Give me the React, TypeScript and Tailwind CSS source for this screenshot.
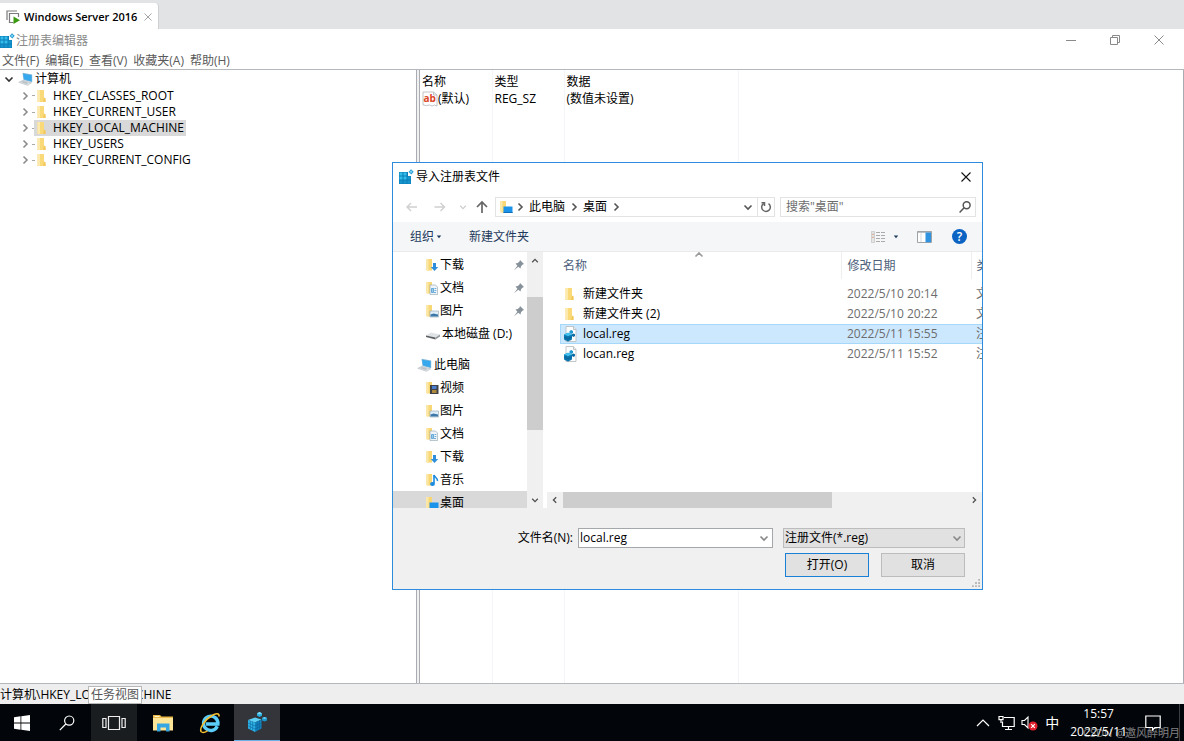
import { useState } from "react"
import type { ReactNode } from "react"

const TREE_KEYS = [
  "HKEY_CLASSES_ROOT",
  "HKEY_CURRENT_USER",
  "HKEY_LOCAL_MACHINE",
  "HKEY_USERS",
  "HKEY_CURRENT_CONFIG",
]

const MENUS = ["文件(F)", "编辑(E)", "查看(V)", "收藏夹(A)", "帮助(H)"]

const FILES = [
  { name: "新建文件夹", date: "2022/5/10 20:14", type: "文件夹", folder: true },
  { name: "新建文件夹 (2)", date: "2022/5/10 20:22", type: "文件夹", folder: true },
  { name: "local.reg", date: "2022/5/11 15:55", type: "注册表项", folder: false },
  { name: "locan.reg", date: "2022/5/11 15:52", type: "注册表项", folder: false },
]

type PlaceKind = "download" | "doc" | "picture" | "video" | "music" | "desktop"

const QUICK: { label: string; kind: PlaceKind }[] = [
  { label: "下载", kind: "download" },
  { label: "文档", kind: "doc" },
  { label: "图片", kind: "picture" },
]

const PLACES: { label: string; kind: PlaceKind }[] = [
  { label: "视频", kind: "video" },
  { label: "图片", kind: "picture" },
  { label: "文档", kind: "doc" },
  { label: "下载", kind: "download" },
  { label: "音乐", kind: "music" },
  { label: "桌面", kind: "desktop" },
]

function Chevron({ dir, className }: { dir: "up" | "down" | "left" | "right"; className?: string }) {
  const d = {
    up: "M1.5 6.5 5 3l3.5 3.5",
    down: "M1.5 3.5 5 7l3.5-3.5",
    left: "M6.5 1.5 3 5l3.5 3.5",
    right: "M3.5 1.5 7 5 3.5 8.5",
  }[dir]
  return (
    <svg viewBox="0 0 10 10" className={`shrink-0 ${className ?? "size-2"}`} fill="none" stroke="currentColor" strokeWidth="1.6">
      <path d={d} />
    </svg>
  )
}

function FolderIcon() {
  return (
    <svg viewBox="0 0 12 14" className="h-3.5 w-3 shrink-0">
      <path d="M1.500 1H8v8l1.500 1v3h-8z" fill="#f9d978" />
      <path d="M1.500 1H4v12l-2.500-.5z" fill="#fce9ae" />
      <path d="M8 8.500l1.500.8V13H7.200z" fill="#f1c75a" />
    </svg>
  )
}

function RegIcon() {
  return (
    <svg viewBox="0 0 16 16" className="size-4 shrink-0">
      <path d="M1 3h9v4h3v8H1z" fill="#0b7fb9" />
      <path d="M1.500 3.500h3v3h-3zM5.500 3.500h3v3h-3zM1.500 7.500h3v3h-3zM5.500 7.500h3v3h-3z" fill="#35bdea" />
      <path d="M9.500 7.500h3v3h-3zM1.500 11.500h3v3h-3zM5.500 11.500h3v3h-3zM9.500 11.500h3v3h-3z" fill="#1795cd" />
      <path d="M13 .3l2.700 2.500L13.300 5.500 10.500 3z" fill="#2a9fd4" />
      <path d="M13 1.600l1.300 1.200-1.200 1.300-1.300-1.200z" fill="#8fdaf5" />
    </svg>
  )
}

function CubeShape() {
  return (
    <>
      <path d="M1 8 8 5.500l6.500 2L8 10.500z" fill="#5fd0f5" />
      <path d="M1 8l7 2.500V20l-7-3.500z" fill="#2cb1e6" />
      <path d="M8 10.500l6.500-3v9L8 20z" fill="#1483be" />
      <path d="M3.300 8.900v8.700M5.700 9.700v9.100M1 11l7 3 6.500-3M1 13.800l7 3.200 6.500-3.200M10.200 9.500v9.500M12.400 8.500v9.300" stroke="#0a5a90" strokeWidth=".5" fill="none" />
      <path d="M10 1.200 12.500 0 15 1.200v2.600L12.500 5 10 3.800z" fill="#2aaee0" />
      <path d="M10 1.200 12.500 0 15 1.200l-2.500 1.200z" fill="#7fdcf8" />
      <path d="M15 6l2.500-1L20 6v2.500l-2.500 1L15 8.500z" fill="#1c95cb" />
      <path d="M15 6l2.500-1L20 6l-2.500 1z" fill="#69d0f2" />
    </>
  )
}

function RegFileIcon() {
  return (
    <svg viewBox="0 0 16 16" className="size-4 shrink-0">
      <path d="M3 .5h7.500L13 3.500v12H3z" fill="#fdfdfd" stroke="#b5b9bd" strokeWidth=".8" />
      <path d="M10.500.5v3H13" fill="#e8eaec" stroke="#b5b9bd" strokeWidth=".8" />
      <path d="M1 8.500l4-1.700 4 1.700v5l-4 2-4-2z" fill="#0b7db8" />
      <path d="M1 8.500l4-1.700 4 1.700-4 1.700z" fill="#3fc0ef" />
      <path d="M6.500 5l1.700-.9L10 5v2l-1.800.9L6.500 7z" fill="#1d9ad2" />
      <path d="M9 8.200l1.500-.8 1.500.8v1.900l-1.500.8L9 10.100z" fill="#0f6da4" />
      <path d="M5 10.200v5.300M3 9.500v5M7 9.500v5M1 11l4 1.900L9 11" stroke="#0a5688" strokeWidth=".5" fill="none" />
    </svg>
  )
}

function ComputerIcon() {
  return (
    <svg viewBox="0 0 16 14" className="h-3.5 w-4 shrink-0">
      <path d="M4.500.8l9.700 1.700v7.800L5.500 8z" fill="#7fb6d8" />
      <path d="M5.200 1.700l8.300 1.500v6.100L6 7.300z" fill="#35a8ee" />
      <path d="M.8 10.300l4-2 8.700 2.500-4 2.500z" fill="#dde2e5" stroke="#a6aeb4" strokeWidth=".5" />
      <path d="M3 10.100l2-1 5.500 1.700-1.800 1.100z" fill="#b9c1c7" />
    </svg>
  )
}

function DriveIcon() {
  return (
    <svg viewBox="0 0 16 14" className="h-3.5 w-4 shrink-0">
      <path d="M1 8.500 6 5.500l9 2-4.500 3z" fill="#e0e3e5" />
      <path d="M1 8.500l9.500 2v2L1 10z" fill="#5c6063" />
      <path d="M10.500 10.500l4.500-3v2l-4.500 3z" fill="#96999c" />
    </svg>
  )
}

function PlaceIcon({ kind }: { kind: PlaceKind }) {
  return (
    <svg viewBox="0 0 14 14" className="size-3.5 shrink-0">
      <path d="M1 1h6v11.500H3L1 12z" fill="#f8d775" />
      <path d="M1 1h2.500v12L1 12z" fill="#fbe7a8" />
      {kind === "download" && <path d="M8 5h3v4h2.200L9.500 13 5.800 9H8z" fill="#2d8fdc" />}
      {kind === "doc" && (
        <>
          <path d="M5 4h5.500l2 2v7.500H5z" fill="#eef4f8" stroke="#8fa2af" strokeWidth=".6" />
          <path d="M6.500 7.500h2v4h-2zM9.500 7.500h1.800M9.500 9.500h1.800M9 11.500h2" stroke="#4d9bd0" strokeWidth=".8" fill="#9ccbe8" />
        </>
      )}
      {kind === "picture" && (
        <>
          <path d="M5 7h8.500v6H5z" fill="#dfeef8" stroke="#8fa2af" strokeWidth=".6" />
          <path d="M5.500 10.500l3-1 4.500 1v2H5.500z" fill="#3d78a8" />
        </>
      )}
      {kind === "video" && (
        <>
          <path d="M5 4h8.500v9H5z" fill="#3f4347" />
          <path d="M7 5h4.500v3H7z" fill="#4a7fd0" />
          <path d="M7 9h4.500v3H7z" fill="#b08a3c" />
        </>
      )}
      {kind === "music" && (
        <>
          <path d="M9 2v8.500" stroke="#1b8be0" strokeWidth="1.600" />
          <path d="M9 2c.5 2.500 4 3 3.500 6" stroke="#1b8be0" strokeWidth="1.600" fill="none" />
          <ellipse cx="7.500" cy="11" rx="2.400" ry="2" fill="#1b8be0" />
        </>
      )}
      {kind === "desktop" && (
        <>
          <path d="M4.500 6.500h9V13h-9z" fill="#1b93ea" />
          <path d="M4.500 12h9v1h-9z" fill="#0d6fbb" />
        </>
      )}
    </svg>
  )
}

function PinIcon() {
  return (
    <svg viewBox="0 0 12 12" className="size-3 shrink-0">
      <path d="M7 1l4 4-1.300.6L8 7.300 7.500 9.500 5.300 7.800 1 11.300 4.400 6.800 2.500 4.500l2.300-.4L6.500 2.400z" fill="#87919a" />
    </svg>
  )
}

function StringValueIcon() {
  return (
    <svg viewBox="0 0 16 16" className="size-4 shrink-0">
      <path d="M1 1h10.500L15 4v11l-2.500-1-2.500 1-2.500-1-3 .5L1 14z" fill="#fff" stroke="#b9bdc1" strokeWidth=".9" />
      <path d="M11.500 1v3H15" fill="none" stroke="#b9bdc1" strokeWidth=".9" />
      <text x="1.500" y="11" fontSize="10" fontWeight="700" fill="#dc4526">ab</text>
    </svg>
  )
}

function SearchIcon({ className, weight }: { className: string; weight: number }) {
  return (
    <svg viewBox="0 0 16 16" className={className} fill="none" stroke="currentColor" strokeWidth={weight}>
      <circle cx="10.200" cy="5.600" r="4.600" />
      <path d="M6.800 9 .8 15.200" />
    </svg>
  )
}

function Place({ icon, label, nested, pinned, selected }: {
  icon: ReactNode
  label: string
  nested?: boolean
  pinned?: boolean
  selected?: boolean
}) {
  return (
    <li>
      <button
        type="button"
        className={`flex h-[23px] w-full items-center pr-0.5 ${nested ? "pl-8" : "pl-6"} ${selected ? "bg-[#d9d9d9]" : ""}`}
      >
        {icon}
        <span className="pl-px whitespace-nowrap">{label}</span>
        {pinned && <span className="ml-auto"><PinIcon /></span>}
      </button>
    </li>
  )
}

function ImportDialog() {
  const [selected, setSelected] = useState("local.reg")

  return (
    <section
      role="dialog"
      aria-labelledby="dialog-title"
      className="absolute top-[162px] left-[392px] flex w-[591px] flex-col border border-[#2f8bdb] bg-white"
    >
      <header className="flex h-7 items-center pr-2 pl-[5px]">
        <RegIcon />
        <h2 id="dialog-title" className="pl-0.5">导入注册表文件</h2>
        <button type="button" aria-label="关闭" className="ml-auto flex size-4 items-center justify-center">
          <svg viewBox="0 0 10 10" className="size-2.5" stroke="#111" strokeWidth="1.100">
            <path d="M.5.5l9 9M9.500.5l-9 9" />
          </svg>
        </button>
      </header>

      {/* Navigation */}
      <div className="flex h-[31px] items-center pr-1.5 pl-3">
        <button type="button" aria-label="后退" className="w-7 text-[#cfcfcf]">
          <svg viewBox="0 0 14 12" className="h-3 w-3.5" fill="none" stroke="currentColor" strokeWidth="1.400">
            <path d="M12 6H2M6 2 2 6l4 4" />
          </svg>
        </button>
        <button type="button" aria-label="前进" className="w-[26px] text-[#cfcfcf]">
          <svg viewBox="0 0 14 12" className="h-3 w-3.5" fill="none" stroke="currentColor" strokeWidth="1.400">
            <path d="M1.500 6h10M7.500 2l4 4-4 4" />
          </svg>
        </button>
        <button type="button" aria-label="最近位置" className="w-4 text-[#cfcfcf]">
          <Chevron dir="down" />
        </button>
        <button type="button" aria-label="上移" className="w-5 text-[#666]">
          <svg viewBox="0 0 14 14" className="size-3.5" fill="none" stroke="currentColor" strokeWidth="1.700">
            <path d="M7 13V2.500M2 7l5-5 5 5" />
          </svg>
        </button>
        <div className="flex h-5 min-w-0 flex-1 items-center border border-[#e3e3e3] pl-[3px]">
          <PlaceIcon kind="desktop" />
          <Chevron dir="right" className="ml-0.5 size-2.5 text-[#555]" />
          <span className="px-1 whitespace-nowrap">此电脑</span>
          <Chevron dir="right" className="size-2.5 text-[#555]" />
          <span className="px-1 whitespace-nowrap">桌面</span>
          <Chevron dir="right" className="size-2.5 text-[#555]" />
          <button type="button" aria-label="历史" className="ml-auto px-1 text-[#555]">
            <Chevron dir="down" className="size-2.5" />
          </button>
          <button type="button" aria-label="刷新" className="flex h-full w-[17px] items-center justify-center border-l border-[#e3e3e3] text-[#666]">
            <svg viewBox="0 0 12 12" className="size-3" fill="none" stroke="currentColor" strokeWidth="1.500">
              <path d="M8.500 2.600a4.300 4.300 0 1 1-4.800-.1" />
              <path d="M1.500 1.800h3v3.200" />
            </svg>
          </button>
        </div>
        <label className="ml-[5px] flex h-5 w-[196px] items-center border border-[#e3e3e3] pr-1 pl-[5px] text-[#6d6d6d]">
          <input aria-label="搜索" placeholder='搜索"桌面"' className="min-w-0 flex-1 outline-none placeholder:text-[#6d6d6d]" />
          <span className="text-[#555]"><SearchIcon className="size-3" weight={2} /></span>
        </label>
      </div>

      {/* Toolbar */}
      <div className="flex h-[30px] items-center border-b border-[#e8eaec] bg-[#f4f6f8] pr-[15px] pl-[17px] text-[#1e395b]">
        <button type="button" className="flex items-center gap-0.5">
          组织
          <svg viewBox="0 0 6 4" className="h-1 w-1.5" fill="currentColor"><path d="M.8.5h4.400L3 3.200z" /></svg>
        </button>
        <button type="button" className="ml-[27px]">新建文件夹</button>
        <button type="button" aria-label="视图" className="ml-auto flex items-center gap-2">
          <svg viewBox="0 0 14 12" className="h-3 w-3.5">
            <path d="M.5.5h3v11h-3z" fill="#e6e6e6" stroke="#bbb" strokeWidth=".6" />
            <path d="M5 1.500h4M10 1.500h4M5 4.500h4M10 4.500h4M5 7.500h4M10 7.500h4M5 10.500h4M10 10.500h4" stroke="#aaa" />
            <path d="M1.300 3.300h1.400M1.300 6.300h1.400" stroke="#d58b6a" />
          </svg>
          <svg viewBox="0 0 6 4" className="h-1 w-1.5" fill="currentColor"><path d="M.8.5h4.400L3 3.200z" /></svg>
        </button>
        <button type="button" aria-label="预览窗格" className="ml-[18px]">
          <svg viewBox="0 0 15 12" className="h-3 w-[15px]">
            <path d="M.5.5h14v11H.5z" fill="#fff" stroke="#9fa4a9" />
            <path d="M.5 1.200h14" stroke="#9fa4a9" />
            <path d="M8.500 1.500H14v9.700H8.500z" fill="#2f93e0" />
            <path d="M4 2v9" stroke="#d5d9dc" />
          </svg>
        </button>
        <button type="button" aria-label="帮助" className="ml-5 flex size-[15px] items-center justify-center rounded-full bg-[#0b63c4] text-xs font-semibold text-white">
          ?
        </button>
      </div>

      <div className="flex h-64 overflow-hidden">
        <ul className="w-[134px] shrink-0 overflow-hidden pt-px">
          {QUICK.map((p) => (
            <Place key={p.label} icon={<PlaceIcon kind={p.kind} />} label={p.label} nested pinned />
          ))}
          <Place icon={<DriveIcon />} label="本地磁盘 (D:)" nested />
          <li className="h-2" />
          <Place icon={<ComputerIcon />} label="此电脑" />
          {PLACES.map((p) => (
            <Place key={p.label} icon={<PlaceIcon kind={p.kind} />} label={p.label} nested selected={p.kind === "desktop"} />
          ))}
        </ul>
        <div className="flex w-4 shrink-0 flex-col items-center bg-[#f0f0f0] text-[#505050]">
          <span className="flex h-[17px] items-center"><Chevron dir="up" /></span>
          <div className="mt-7 h-[133px] w-full bg-[#cdcdcd]" />
          <span className="mt-auto flex h-4 items-center"><Chevron dir="down" /></span>
        </div>

        <div className="ml-1 flex min-w-0 flex-1 flex-col">
          <div className="relative flex-1 overflow-hidden pl-[13px]">
            <Chevron dir="up" className="absolute -top-0.5 left-[147px] size-2.5 text-[#999]" />
            <table className="w-[560px] table-fixed border-collapse text-left">
              <colgroup>
                <col className="w-[281px]" />
                <col className="w-[130px]" />
                <col />
              </colgroup>
              <thead className="text-[#4c607a]">
                <tr className="h-[27px]">
                  <th className="border-r border-[#eeeeee] pl-[3px] font-normal">名称</th>
                  <th className="border-r border-[#eeeeee] pl-1.5 font-normal">修改日期</th>
                  <th className="pl-[5px] font-normal">类型</th>
                </tr>
              </thead>
              <tbody>
                <tr className="h-[5px]"><td colSpan={3} /></tr>
                {FILES.map((f) => (
                  <tr
                    key={f.name}
                    onClick={() => setSelected(f.name)}
                    className={`h-5 ${f.name === selected ? "bg-[#cce8ff] outline -outline-offset-1 outline-[#a6d8fb]" : ""}`}
                  >
                    <td>
                      <span className="flex items-center pl-[3px]">
                        <span className="flex w-5 items-center">{f.folder ? <span className="pl-px"><FolderIcon /></span> : <RegFileIcon />}</span>
                        {f.name}
                      </span>
                    </td>
                    <td className="pl-1.5 text-[#6d6d6d]">{f.date}</td>
                    <td className="pl-[5px] text-[#6d6d6d]">{f.type}</td>
                  </tr>
                ))}
              </tbody>
            </table>
          </div>
          <div className="flex h-4 items-center bg-[#f0f0f0] text-[#505050]">
            <span className="flex w-4 justify-center"><Chevron dir="left" /></span>
            <div className="h-full w-[269px] bg-[#cdcdcd]" />
            <span className="ml-auto flex w-4 justify-center"><Chevron dir="right" /></span>
          </div>
        </div>
      </div>

      {/* File name + actions */}
      <footer className="relative flex flex-col items-end gap-[5px] bg-[#f0f0f0] pt-5 pr-[17px] pb-3">
        <div className="flex items-center">
          <label htmlFor="filename" className="pr-[5px]">文件名(N):</label>
          <div className="flex h-5 w-[195px] items-center border border-[#a5a8ab] bg-white pr-[3px] pl-px">
            <input id="filename" value={selected} onChange={(e) => setSelected(e.target.value)} className="min-w-0 flex-1 outline-none" />
            <Chevron dir="down" className="size-2.5 text-[#888]" />
          </div>
          <div className="relative ml-2.5">
            <select aria-label="文件类型" className="h-5 w-[182px] appearance-none border border-[#bcbcbc] bg-[#e1e1e1] pl-px outline-none">
              <option>注册文件(*.reg)</option>
            </select>
            <Chevron dir="down" className="pointer-events-none absolute top-[5px] right-[3px] size-2.5 text-[#888]" />
          </div>
        </div>
        <div className="flex gap-3">
          <button type="button" className="h-6 w-[84px] border border-[#1a7fd6] bg-[#e1e1e1]">打开(O)</button>
          <button type="button" className="h-6 w-[84px] border border-[#bcbcbc] bg-[#e1e1e1]">取消</button>
        </div>
        <svg viewBox="0 0 9 9" className="absolute right-0.5 bottom-0.5 size-2" fill="#b5b5b5">
          <path d="M7 0h2v2H7zM7 3.500h2v2H7zM3.500 3.500h2v2h-2zM7 7h2v2H7zM3.500 7h2v2h-2zM0 7h2v2H0z" />
        </svg>
      </footer>
    </section>
  )
}

function Taskbar() {
  return (
    <nav className="flex h-[37px] shrink-0 items-stretch gap-px bg-[#020509] text-white">
      <button type="button" aria-label="开始" className="flex w-[43px] items-center justify-center">
        <svg viewBox="0 0 16 16" className="size-4" fill="#fff">
          <path d="M0 2.200 6.500 1.300v6.300H0zM7.300 1.200 16 0v7.600H7.300zM0 8.400h6.500v6.300L0 13.800zM7.300 8.400H16V16l-8.700-1.200z" />
        </svg>
      </button>
      <button type="button" aria-label="搜索" className="flex w-[46px] items-center justify-center">
        <SearchIcon className="size-4" weight={1.2} />
      </button>
      <button type="button" aria-label="任务视图" className="flex w-[46px] items-center justify-center bg-[#1a1d20]">
        <svg viewBox="0 0 24 16" className="h-4 w-6" fill="none" stroke="#eee" strokeWidth="1.200">
          <path d="M6.500 1.500h11v13h-11zM4 3.500H.8v9H4zM20 3.500h3.200v9H20z" />
        </svg>
      </button>
      <button type="button" aria-label="文件资源管理器" className="ml-0.5 flex w-[46px] items-center justify-center">
        <svg viewBox="0 0 22 18" className="h-[18px] w-[22px]">
          <path d="M1 1h7l1.500 1.500H21V16H1z" fill="#e8b849" />
          <path d="M1 4h20v12.500H1z" fill="#fde598" />
          <path d="M2.500 2h5v1h-5z" fill="#fff3c8" />
          <path d="M5 9.500h12.500V17.500H14v-4H8.500v4H5z" fill="#36a7e3" />
        </svg>
      </button>
      <button type="button" aria-label="Internet Explorer" className="flex w-[46px] items-center justify-center">
        <svg viewBox="0 0 22 22" className="size-[22px]" fill="none">
          <path d="M18.300 14.300a7.200 7.200 0 1 1 .6-2.300H7" stroke="#5bcdf8" strokeWidth="3.400" />
          <path d="M2.500 20C-.5 17 6 7.500 13 3.500 17 1 20.500 1 20 4.500" stroke="#f5bf30" strokeWidth="1.600" />
          <path d="M2.500 20c1.500 1 4 .2 6-1.200" stroke="#f5bf30" strokeWidth="1.400" />
        </svg>
      </button>
      <button type="button" aria-label="注册表编辑器" className="flex w-[46px] items-center justify-center border-b border-[#6bb0e4] bg-[#33353a]">
        <svg viewBox="0 0 20 20" className="size-5"><CubeShape /></svg>
      </button>

      {/* Tray */}
      <div className="ml-auto flex items-center">
        <button type="button" aria-label="显示隐藏的图标" className="mr-2">
          <svg viewBox="0 0 14 8" className="h-2 w-3.5" fill="none" stroke="#fff" strokeWidth="1.200"><path d="M1 7l6-6 6 6" /></svg>
        </button>
        <svg viewBox="0 0 17 16" className="mr-1.5 h-4 w-[17px]" fill="none" stroke="#fff" strokeWidth="1.200">
          <path d="M6 2.500h10.200v9H4.500V6.500M10.500 11.500v3M7 14.500h7M1 1.500h4v3.200H1zM3 4.700V8" />
        </svg>
        <svg viewBox="0 0 17 16" className="mr-[7px] h-4 w-[17px]" fill="none">
          <path d="M1 5.500h2.500L7 2v11L3.500 9.500H1z" stroke="#fff" strokeWidth="1.100" />
          <circle cx="12" cy="11" r="4.500" fill="#e0202c" />
          <path d="M10.200 9.200l3.600 3.600M13.800 9.200l-3.600 3.600" stroke="#fff" strokeWidth="1.200" />
        </svg>
        <button type="button" className="text-sm">中</button>
        <div className="mr-2.5 ml-[11px] pt-px text-center leading-[18px]">
          <div>15:57</div>
          <div>2022/5/11</div>
        </div>
        <button type="button" aria-label="通知" className="mr-[18px] ml-2">
          <svg viewBox="0 0 16 16" className="size-4" fill="none" stroke="#fff" strokeWidth="1.200">
            <path d="M.8 1h14.400v11.500H10L7.500 15v-2.500H.8z" />
          </svg>
        </button>
        <div className="mr-1 h-full border-l border-[#3a3d41]" />
      </div>
    </nav>
  )
}

export default function App() {
  const [activeKey, setActiveKey] = useState("HKEY_LOCAL_MACHINE")

  return (
    <div className="relative flex h-screen flex-col overflow-hidden bg-white font-['Open_Sans','Noto_Sans_CJK_SC',sans-serif] text-xs leading-4 text-black">
      {/* Tab strip */}
      <div className="flex h-[29px] shrink-0 items-end bg-[#e2e3e5]">
        <div className="flex h-[26px] w-[159px] items-center rounded-tr-sm border-r border-[#cfd0d2] bg-white pt-px pl-1.5">
          <svg viewBox="0 0 14 14" className="size-3.5 shrink-0" fill="none">
            <path d="M1 10V1h10M3.500 13V3.500h9V7M3.500 12.500h4" stroke="#7b7b7b" strokeWidth="1.200" />
            <path d="M7.500 6.500 14 10.200 7.500 14z" fill="#3c9a12" />
          </svg>
          <span className="pl-1 text-[11px] font-semibold whitespace-nowrap">Windows Server 2016</span>
          <button type="button" aria-label="关闭标签" className="mr-1.5 ml-auto">
            <svg viewBox="0 0 8 8" className="size-2" stroke="#a5a5a5"><path d="M.5.5l7 7M7.500.5l-7 7" /></svg>
          </button>
        </div>
      </div>

      {/* Title bar */}
      <header className="flex h-[23px] shrink-0 items-center text-[#8a8a8a]">
        <span className="-ml-px"><RegIcon /></span>
        <h1 className="pl-px">注册表编辑器</h1>
        <div className="ml-auto flex items-center gap-[34px] pr-5 pb-0.5">
          <button type="button" aria-label="最小化">
            <svg viewBox="0 0 10 10" className="size-2.5" stroke="currentColor"><path d="M0 5.500h10" /></svg>
          </button>
          <button type="button" aria-label="还原">
            <svg viewBox="0 0 10 10" className="size-2.5" fill="none" stroke="currentColor"><path d="M.5 2.500h7v7h-7zM2.500 2.500v-2h7v7h-2" /></svg>
          </button>
          <button type="button" aria-label="关闭">
            <svg viewBox="0 0 10 10" className="size-2.5" stroke="currentColor"><path d="M.5.5l9 9M9.500.5l-9 9" /></svg>
          </button>
        </div>
      </header>
      <div className="flex h-[17px] shrink-0 items-center gap-1.5 pl-0.5 text-[#5a5a5a]">
        {MENUS.map((m) => (
          <button key={m} type="button">{m}</button>
        ))}
      </div>

      <main className="flex min-h-0 flex-1 gap-0.5 border-y border-[#b4b7bc] bg-[#f0f0f0]">
        <div className="w-[417px] shrink-0 border-r border-[#a9acb2] bg-white pt-px">
          <div className="flex h-4 items-center pl-1">
            <Chevron dir="down" className="size-2.5 text-[#333]" />
            <span className="flex items-center pl-1"><ComputerIcon /></span>
            <span className="pl-px">计算机</span>
          </div>
          <ul>
            {TREE_KEYS.map((key) => (
              <li key={key} className="flex h-[17px] items-center pl-5 not-first:h-4">
                <Chevron dir="right" className="size-2.5 text-[#8c8c8c]" />
                <span className="ml-0.5 w-0.5 border-t border-dotted border-[#aaa]" />
                <button
                  type="button"
                  onClick={() => setActiveKey(key)}
                  className={`flex h-4 items-center pr-0.5 pl-0.5 ${key === activeKey ? "bg-[#d9d9d9]" : ""}`}
                >
                  <FolderIcon />
                  <span className="pl-[5px]">{key}</span>
                </button>
              </li>
            ))}
          </ul>
        </div>
        <div className="min-w-0 flex-1 border-x border-[#a9acb2] bg-white">
          <table className="h-full w-full table-fixed border-collapse text-left">
            <colgroup>
              <col className="w-[72px]" />
              <col className="w-[72px]" />
              <col className="w-[174px]" />
              <col />
            </colgroup>
            <thead>
              <tr className="h-[21px] [&>th]:border-r [&>th]:border-[#f4f5f9] [&>th]:pt-0.5 [&>th]:pl-0.5 [&>th]:font-normal [&>th]:last:border-r-0">
                <th>名称</th>
                <th>类型</th>
                <th>数据</th>
                <th />
              </tr>
            </thead>
            <tbody className="[&_td]:border-r [&_td]:border-[#f4f5f9] [&_td]:pl-0.5 [&_td]:last:border-r-0">
              <tr className="h-4">
                <td>
                  <span className="flex items-center">
                    <StringValueIcon />
                    (默认)
                  </span>
                </td>
                <td>REG_SZ</td>
                <td>(数值未设置)</td>
                <td />
              </tr>
              <tr><td /><td /><td /><td /></tr>
            </tbody>
          </table>
        </div>
      </main>

      <footer className="relative flex h-5 shrink-0 items-center bg-[#eeeeee] pt-px">
        <span className="whitespace-nowrap">计算机\HKEY_LOCAL_MACHINE</span>
        <span role="tooltip" className="absolute bottom-0 left-[88px] border border-[#b8b8b8] bg-white px-0.5 text-[#575757]">任务视图</span>
      </footer>

      <Taskbar />
      <ImportDialog />
      <span className="absolute right-1 bottom-0 text-[11px] text-white/50">CSDN @邀风醉明月</span>
    </div>
  )
}
